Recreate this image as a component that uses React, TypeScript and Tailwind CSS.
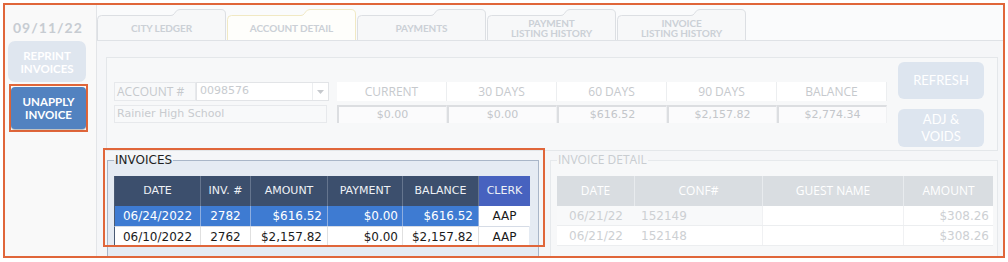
import React from 'react';

type TabDef = { lines: string[]; active?: boolean };

const tabs: TabDef[] = [
  { lines: ['CITY LEDGER'] },
  { lines: ['ACCOUNT DETAIL'], active: true },
  { lines: ['PAYMENTS'] },
  { lines: ['PAYMENT', 'LISTING HISTORY'] },
  { lines: ['INVOICE', 'LISTING HISTORY'] },
];

const aging = [
  ['CURRENT', '$0.00'],
  ['30 DAYS', '$0.00'],
  ['60 DAYS', '$616.52'],
  ['90 DAYS', '$2,157.82'],
  ['BALANCE', '$2,774.34'],
];

const invCols = 'grid grid-cols-[86px_50px_77px_75px_76px_51px]';
const detCols = 'grid grid-cols-[78px_128px_141px_89px]';

const Tab: React.FC<TabDef> = ({ lines, active }) => (
  <div className="relative w-[129px] h-[31px] shrink-0">
    <svg className="absolute inset-0" width="129" height="31" viewBox="0 0 129 31">
      <path
        d="M0.5 31V10.5Q0.5 6.5 4.5 6.5H74Q76 6.5 77.5 4.5L78.5 3Q80 0.5 83 0.5H124Q128.5 0.5 128.5 5V31"
        fill={active ? '#fefefb' : '#f7f8f9'}
        stroke={active ? '#f1e9c4' : '#dcdfe3'}
      />
    </svg>
    <div className="relative h-full pt-[6px] flex flex-col items-center justify-center font-[Lato,sans-serif] font-bold text-[10px] leading-[10px] tracking-[-0.1px] text-[#cbd0d6]">
      {lines.map((l) => (
        <span key={l}>{l}</span>
      ))}
    </div>
  </div>
);

export default function App() {
  return (
    <div className="w-[1008px] h-[262px] bg-white overflow-hidden">
      <div className="ml-[3px] mt-[3px] w-[1002px] h-[255px] border-2 border-[#e0663a] flex overflow-hidden bg-[#fafbfc]">
        {/* sidebar */}
        <div className="w-[92px] shrink-0 border-r border-[#e3e5e8] bg-[#f9f9f9] flex flex-col">
          <div className="pt-[15px] pl-[8px] font-[Lato,sans-serif] font-bold text-[14px] leading-[16px] tracking-[1px] text-[#c7ccd2]">
            09/11/22
          </div>
          <div className="mt-[5px] ml-[3px] w-[78px] h-[41px] rounded-[7px] bg-[#dfe6ef] flex flex-col items-center justify-center font-[Lato,sans-serif] font-bold text-[11.5px] leading-[13px] text-white">
            <span>REPRINT</span>
            <span>INVOICES</span>
          </div>
          <div className="mt-[2px] ml-[4px] w-[79px] h-[48px] border-2 border-[#e0663a] py-px">
            <div className="h-full rounded-[4px] bg-[#5282c0] shadow-[0_1px_1px_rgba(0,0,0,0.25)] flex flex-col items-center justify-center font-[Lato,sans-serif] font-bold text-[11.5px] leading-[13px] text-white">
              <span>UNAPPLY</span>
              <span>INVOICE</span>
            </div>
          </div>
        </div>

        {/* main */}
        <div className="flex-1 min-w-0 flex flex-col">
          <div className="h-[35px] shrink-0 flex items-end gap-px">
            {tabs.map((t) => (
              <Tab key={t.lines.join()} lines={t.lines} active={t.active} />
            ))}
          </div>

          <div className="flex-1 min-h-0 overflow-hidden border-t border-[#dfe2e6] bg-[#f5f6f8] pl-[9px] pt-[16px] pr-[5px]">
            {/* account panel */}
            <div className="h-[94px] border border-[#e4e7ea] bg-[#f7f8f9] flex items-start">
              <div className="ml-[7px] mt-[24px] w-[215px] flex flex-col gap-[4px]">
                <div className="flex h-[19px]">
                  <div className="w-[82px] border border-[#e7e9ec] bg-[#f8f9fa] flex items-center pl-[2px] font-['Open_Sans',sans-serif] text-[12px] text-[#c6c9cd]">
                    ACCOUNT #
                  </div>
                  <div className="w-[133px] border border-[#e2e4e7] bg-white flex items-center justify-between pl-[3px] font-['DejaVu_Sans',sans-serif] text-[11px] text-[#c8cbcf]">
                    <span>0098576</span>
                    <span className="w-[16px] h-full border-l border-[#eceef0] flex items-center justify-center">
                      <svg width="7" height="4" viewBox="0 0 7 4">
                        <polygon points="0,0 7,0 3.5,4" fill="#c6c9cd" />
                      </svg>
                    </span>
                  </div>
                </div>
                <div className="w-[213px] h-[18px] border border-[#e7e9ec] bg-[#f8f9fa] flex items-center pl-[2px] font-['DejaVu_Sans',sans-serif] text-[11px] text-[#c8cbcf]">
                  Rainier High School
                </div>
              </div>

              <div className="ml-[8px] mt-[24px] flex flex-col gap-[4px]">
                <div className="flex h-[19px]">
                  {aging.map(([h]) => (
                    <div key={h} className="w-[110px] bg-white border-r border-[#eceef0] flex items-center justify-center font-['Open_Sans',sans-serif] text-[12px] text-[#c6c9cd]">
                      {h}
                    </div>
                  ))}
                </div>
                <div className="flex h-[18px]">
                  {aging.map(([h, v]) => (
                    <div key={h} className="w-[110px] bg-[#fbfbfc] border-t-2 border-l-2 border-r border-[#dcdee1] border-r-[#f0f1f3] flex items-center justify-center font-['DejaVu_Sans',sans-serif] text-[11px] text-[#c3c6ca]">
                      {v}
                    </div>
                  ))}
                </div>
              </div>

              <div className="ml-[11px] mt-[4px] flex flex-col gap-[10px] font-[Lato,sans-serif] text-[13px] text-white">
                <div className="w-[86px] h-[37px] rounded-[6px] bg-[#dde5ef] flex items-center justify-center">
                  REFRESH
                </div>
                <div className="w-[86px] h-[38px] rounded-[6px] bg-[#dde5ef] flex flex-col items-center justify-center leading-[17px]">
                  <span>ADJ &amp;</span>
                  <span>VOIDS</span>
                </div>
              </div>
            </div>

            {/* lower groups */}
            <div className="flex pt-[2px] pl-px gap-[11px]">
              <div className="relative">
                <fieldset className="w-[432px] h-[110px] border border-[#a9b6c8] bg-[#e5ebf3] pl-[6px] pt-[9px]">
                  <legend className="px-px font-['DejaVu_Sans',sans-serif] text-[12px] leading-[14px] text-[#1f1f1f]">
                    INVOICES
                  </legend>
                  <div className="w-[415px] font-['DejaVu_Sans',sans-serif]">
                    <div className={`${invCols} h-[30px] bg-[#3c4f6d] text-[11px] text-[#eef1f6] border-l border-[#4a5a73]`}>
                      {['DATE', 'INV. #', 'AMOUNT', 'PAYMENT', 'BALANCE'].map((h) => (
                        <div key={h} className="flex items-center justify-center border-r border-[#65758e]">
                          {h}
                        </div>
                      ))}
                      <div className="flex items-center justify-center bg-[#4762bf]">CLERK</div>
                    </div>
                    <div className={`${invCols} h-[21px] text-[12px] border-l border-[#4a5a73] border-b border-b-[#d6dce6]`}>
                      <div className="bg-[#3e7bd2] text-white flex items-center justify-center border-r border-[#8eaee0]">06/24/2022</div>
                      <div className="bg-[#3e7bd2] text-white flex items-center justify-center border-r border-[#8eaee0]">2782</div>
                      <div className="bg-[#3e7bd2] text-white flex items-center justify-end pr-[5px] border-r border-[#8eaee0]">$616.52</div>
                      <div className="bg-[#3e7bd2] text-white flex items-center justify-end pr-[4px] border-r border-[#8eaee0]">$0.00</div>
                      <div className="bg-[#3e7bd2] text-white flex items-center justify-end pr-[5px] border-r border-[#8eaee0]">$616.52</div>
                      <div className="bg-white text-[#1a1a1a] flex items-center justify-center">AAP</div>
                    </div>
                    <div className={`${invCols} h-[20px] text-[12px] bg-white text-[#1a1a1a] border-l border-[#4a5a73]`}>
                      <div className="flex items-center justify-center border-r border-[#e0e0e0]">06/10/2022</div>
                      <div className="flex items-center justify-center border-r border-[#e0e0e0]">2762</div>
                      <div className="flex items-center justify-end pr-[5px] border-r border-[#e0e0e0]">$2,157.82</div>
                      <div className="flex items-center justify-end pr-[4px] border-r border-[#e0e0e0]">$0.00</div>
                      <div className="flex items-center justify-end pr-[5px] border-r border-[#e0e0e0]">$2,157.82</div>
                      <div className="flex items-center justify-center">AAP</div>
                    </div>
                  </div>
                </fieldset>
                <div className="absolute left-[-4px] top-[-5px] w-[442px] h-[99px] border-2 border-[#e0663a] pointer-events-none" />
              </div>

              <fieldset className="w-[452px] h-[110px] border border-[#e6e9ec] bg-[#f7f8f9] pl-[6px] pt-[9px]">
                <legend className="px-px font-['Open_Sans',sans-serif] text-[12px] leading-[14px] text-[#c8ccd0]">
                  INVOICE DETAIL
                </legend>
                <div className="w-[436px]">
                  <div className={`${detCols} h-[30px] bg-[#d9dde1] font-['Open_Sans',sans-serif] text-[12px] text-white`}>
                    {['DATE', 'CONF#', 'GUEST NAME', 'AMOUNT'].map((h, i) => (
                      <div key={h} className={`flex items-center justify-center ${i < 3 ? 'border-r border-[#e8ebee]' : ''}`}>
                        {h}
                      </div>
                    ))}
                  </div>
                  {['152149', '152148'].map((c, r) => (
                    <div key={c} className={`${detCols} h-[20px] font-['DejaVu_Sans',sans-serif] text-[12px] text-[#cdd0d3] border-b border-[#eceef0] ${r === 0 ? 'bg-[#f8f9fa]' : 'bg-white'}`}>
                      <div className="flex items-center justify-center">06/21/22</div>
                      <div className="flex items-center pl-[6px] border-r border-[#f0f1f3]">{c}</div>
                      <div className="bg-white border-r border-[#f0f1f3]" />
                      <div className="flex items-center justify-end pr-[4px] bg-white">$308.26</div>
                    </div>
                  ))}
                </div>
              </fieldset>
            </div>
          </div>
        </div>
      </div>
    </div>
  );
}
